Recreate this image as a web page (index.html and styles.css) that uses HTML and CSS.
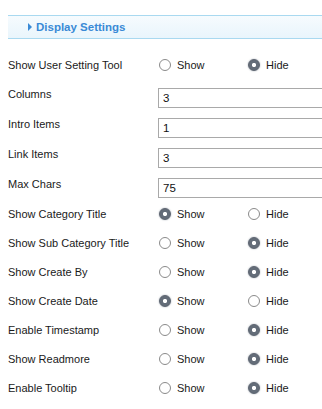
FILE: index.html
```html
<!DOCTYPE html>
<html lang="en">
<head>
  <meta charset="UTF-8" />
  <title>Display Settings</title>
  <link rel="stylesheet" href="styles.css">
</head>
<body>

  <div class="panel">
    <div class="panel-head">
      <span class="arrow"></span>
      <span class="title">Display Settings</span>
    </div>

    <div class="rows">
      <div class="row radio-row">
        <div class="label">Show User Setting Tool</div>
        <div class="opt"><span class="radio"></span>Show</div>
        <div class="opt"><span class="radio on"></span>Hide</div>
      </div>
      <div class="row input-row">
        <div class="label">Columns</div>
        <input type="text" value="3">
      </div>
      <div class="row input-row">
        <div class="label">Intro Items</div>
        <input type="text" value="1">
      </div>
      <div class="row input-row">
        <div class="label">Link Items</div>
        <input type="text" value="3">
      </div>
      <div class="row input-row">
        <div class="label">Max Chars</div>
        <input type="text" value="75">
      </div>
      <div class="row radio-row">
        <div class="label">Show Category Title</div>
        <div class="opt"><span class="radio on"></span>Show</div>
        <div class="opt"><span class="radio"></span>Hide</div>
      </div>
      <div class="row radio-row">
        <div class="label">Show Sub Category Title</div>
        <div class="opt"><span class="radio"></span>Show</div>
        <div class="opt"><span class="radio on"></span>Hide</div>
      </div>
      <div class="row radio-row">
        <div class="label">Show Create By</div>
        <div class="opt"><span class="radio"></span>Show</div>
        <div class="opt"><span class="radio on"></span>Hide</div>
      </div>
      <div class="row radio-row">
        <div class="label">Show Create Date</div>
        <div class="opt"><span class="radio on"></span>Show</div>
        <div class="opt"><span class="radio"></span>Hide</div>
      </div>
      <div class="row radio-row">
        <div class="label">Enable Timestamp</div>
        <div class="opt"><span class="radio"></span>Show</div>
        <div class="opt"><span class="radio on"></span>Hide</div>
      </div>
      <div class="row radio-row">
        <div class="label">Show Readmore</div>
        <div class="opt"><span class="radio"></span>Show</div>
        <div class="opt"><span class="radio on"></span>Hide</div>
      </div>
      <div class="row radio-row">
        <div class="label">Enable Tooltip</div>
        <div class="opt"><span class="radio"></span>Show</div>
        <div class="opt"><span class="radio on"></span>Hide</div>
      </div>
    </div>
  </div>

</body>
</html>
```

FILE: styles.css
```css
body {
  font-family: 'Liberation Sans', Arial, sans-serif;
  font-size: 11px;
  color: #1a1a1a;
  background: #fff;
  margin: 0;
  overflow: hidden;
}
.panel {
  padding: 15px 0 0 8px;
  overflow: hidden;
}
.panel-head {
  display: flex;
  align-items: center;
  height: 22px;
  border-top: 1px solid #a9d9f0;
  border-bottom: 1px solid #a9d9f0;
  background: linear-gradient(#f6fbfe, #e9f5fc);
  padding-left: 20px;
}
.arrow {
  width: 0;
  height: 0;
  border-top: 4px solid transparent;
  border-bottom: 4px solid transparent;
  border-left: 4px solid #3a8ad6;
  margin-right: 4px;
}
.title {
  font-weight: bold;
  font-size: 11.5px;
  color: #3a8ad6;
}
.rows {
  padding-top: 18px;
  overflow: hidden;
}
.row {
  display: flex;
  align-items: flex-start;
}
.radio-row {
  height: 29px;
}
.input-row {
  height: 30px;
}
.label {
  flex-shrink: 0;
  width: 150px;
  line-height: 16px;
}
.opt {
  flex-shrink: 0;
  display: flex;
  align-items: center;
  width: 89px;
  line-height: 16px;
}
.radio {
  width: 10px;
  height: 10px;
  border: 1px solid #8a8a8a;
  border-radius: 50%;
  background: #fff;
  margin: 0 6px 0 1px;
  box-sizing: content-box;
}
.radio.on {
  border-color: #59616d;
  background: radial-gradient(circle, #fff 0 1.8px, #646d79 2.4px);
  box-shadow: 0 0 1.5px #8a939f;
}
input {
  flex-shrink: 0;
  width: 190px;
  height: 20px;
  margin: 2px 0 0 0;
  padding: 0 4px;
  border: 1px solid #a9a9a9;
  font-family: 'Liberation Sans', Arial, sans-serif;
  font-size: 11.5px;
  color: #111;
  box-sizing: border-box;
}
```
